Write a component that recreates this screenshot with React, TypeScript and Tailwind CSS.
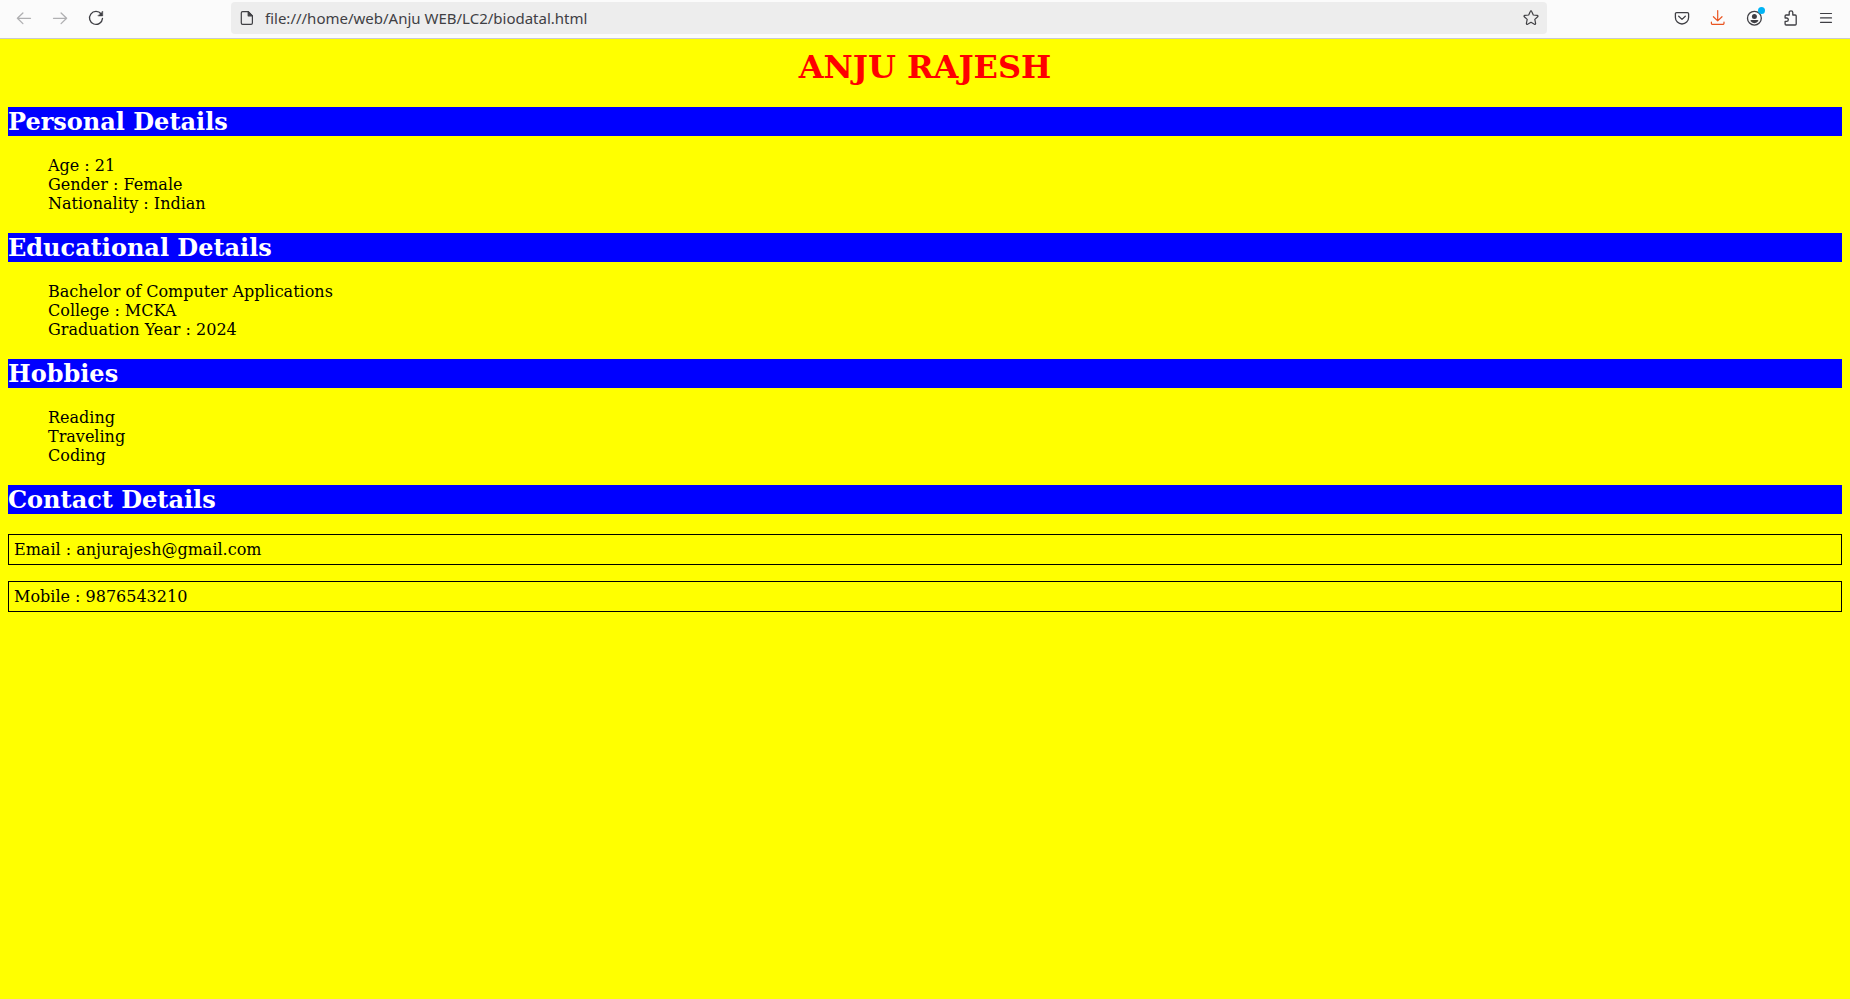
import type { ReactNode } from "react";

function Icon({ children }: { children: ReactNode }) {
  return (
    <svg
      viewBox="0 0 16 16"
      className="size-4 shrink-0"
      fill="none"
      stroke="currentColor"
      strokeWidth="1.2"
      strokeLinecap="round"
      strokeLinejoin="round"
      aria-hidden="true"
    >
      {children}
    </svg>
  );
}

function ToolButton({
  label,
  disabled,
  className = "text-[#3f3f44]",
  children,
}: {
  label: string;
  disabled?: boolean;
  className?: string;
  children: ReactNode;
}) {
  return (
    <button
      type="button"
      aria-label={label}
      disabled={disabled}
      className={`flex h-8 w-9 items-center justify-center rounded ${className}`}
    >
      <Icon>{children}</Icon>
    </button>
  );
}

function Toolbar() {
  return (
    <header className="flex h-[39px] items-start border-b border-[#c9c9ce] bg-[#fbfbfb] px-1.5 pt-0.5 font-['Noto_Sans',sans-serif]">
      <nav className="flex" aria-label="History">
        <ToolButton label="Back" disabled className="text-[#b0b0b2]">
          <path d="M14.5 8.3H1.4M6.9 3 1.4 8.3l5.5 5.3" strokeWidth="1.3" />
        </ToolButton>
        <ToolButton label="Forward" disabled className="text-[#b0b0b2]">
          <path d="M1.5 8.3h13.1M9.1 3l5.5 5.3-5.5 5.3" strokeWidth="1.3" />
        </ToolButton>
        <ToolButton label="Reload">
          <path d="M13.2 4A6.5 6.5 0 1 0 14.5 8.4" strokeWidth="1.3" />
          <path d="M14.7 1.4v4.5h-4.5z" fill="currentColor" strokeWidth="0.6" />
        </ToolButton>
      </nav>
      <div className="mx-[117px] flex h-8 min-w-0 flex-1 items-center rounded bg-[#ededed] pr-2 pl-2 text-[#404044]">
        <Icon>
          <path d="M3.6 1.6h5.6l4.2 4.2v7.3a1.3 1.3 0 0 1-1.3 1.3H3.6a1.3 1.3 0 0 1-1.3-1.3V2.9a1.3 1.3 0 0 1 1.3-1.3z" />
          <path d="M9.2 1.6v4.2h4.2z" fill="currentColor" />
        </Icon>
        <input
          type="text"
          aria-label="Address"
          defaultValue="file:///home/web/Anju WEB/LC2/biodatal.html"
          className="ml-2.5 h-8 min-w-0 flex-1 bg-transparent text-[15px] outline-none"
        />
        <button type="button" aria-label="Bookmark this page">
          <Icon>
            <path d="M8 .9a.8.8 0 0 1 .7.5l1.6 3.6 3.9.4c.8.1 1 .9.5 1.4l-2.9 2.6.8 3.9c.2.8-.5 1.3-1.2.9L8 12.3l-3.4 1.9c-.7.4-1.4-.1-1.2-.9l.8-3.9-2.9-2.6c-.5-.5-.3-1.3.5-1.4L5.7 5l1.6-3.6A.8.8 0 0 1 8 .9z" />
          </Icon>
        </button>
      </div>
      <div className="flex">
        <ToolButton label="Save to Pocket">
          <path
            d="M2.6 2.6h10.8a1.2 1.2 0 0 1 1.2 1.2v3.6a6.6 6.6 0 0 1-13.2 0V3.8a1.2 1.2 0 0 1 1.2-1.2z"
            strokeWidth="1.3"
          />
          <path d="M4.7 6.3 8 9.4l3.3-3.1" strokeWidth="1.3" />
        </ToolButton>
        <ToolButton label="Downloads" className="text-[#e95420]">
          <path d="M7.7.6v10.2M3.4 6.7l4.3 4.2L12 6.7M1.4 12v1.2a1.2 1.2 0 0 0 1.2 1.2h10.2a1.2 1.2 0 0 0 1.2-1.2V12" />
        </ToolButton>
        <div className="relative">
          <ToolButton label="Account">
            <circle cx="8.4" cy="8.2" r="6.9" strokeWidth="1.3" />
            <circle cx="8.4" cy="6.4" r="2.5" fill="currentColor" stroke="none" />
            <path
              d="M5.3 10h6.2c.6 0 1 .5.8 1a4.6 4.6 0 0 1-7.8 0c-.3-.5.2-1 .8-1z"
              fill="currentColor"
              stroke="none"
            />
          </ToolButton>
          <span className="absolute top-[5px] right-[7px] size-[7px] rounded-full bg-[#00b3f4]" />
        </div>
        <ToolButton label="Extensions">
          <path
            d="M7.2 5V2.6a1.8 1.8 0 0 1 3.6 0V5h2.4a1 1 0 0 1 1 1v8a1 1 0 0 1-1 1H4.1a1 1 0 0 1-1-1v-2.6h1.5a1.7 1.7 0 0 0 0-3.4H3.1V6a1 1 0 0 1 1-1z"
            strokeWidth="1.3"
          />
        </ToolButton>
        <ToolButton label="Open application menu">
          <path d="M2.5 3.5h11M2.5 7.9h11M2.5 12.3h11" />
        </ToolButton>
      </div>
    </header>
  );
}

const sections = [
  { title: "Personal Details", items: ["Age : 21", "Gender : Female", "Nationality : Indian"] },
  {
    title: "Educational Details",
    items: ["Bachelor of Computer Applications", "College : MCKA", "Graduation Year : 2024"],
  },
  { title: "Hobbies", items: ["Reading", "Traveling", "Coding"] },
];

function SectionHeading({ children }: { children: ReactNode }) {
  return <h2 className="bg-[#0000ff] text-[24px] leading-[29px] font-bold text-white">{children}</h2>;
}

export default function App() {
  return (
    <div className="flex min-h-screen flex-col bg-[#ffff00]">
      <Toolbar />
      <main className="flex-1 p-2 font-['DejaVu_Serif',serif] text-[16px] leading-[19px] text-black">
        <h1 className="mb-5 text-center text-[32px] leading-10 font-bold text-[#ff0000]">ANJU RAJESH</h1>
        {sections.map((section) => (
          <section key={section.title} className="mb-5">
            <SectionHeading>{section.title}</SectionHeading>
            <ul className="mt-5 pl-10">
              {section.items.map((item) => (
                <li key={item}>{item}</li>
              ))}
            </ul>
          </section>
        ))}
        <section>
          <SectionHeading>Contact Details</SectionHeading>
          <div className="mt-5 flex flex-col gap-4">
            <p className="border border-black p-[5px]">Email : anjurajesh@gmail.com</p>
            <p className="border border-black p-[5px]">Mobile : 9876543210</p>
          </div>
        </section>
      </main>
    </div>
  );
}
